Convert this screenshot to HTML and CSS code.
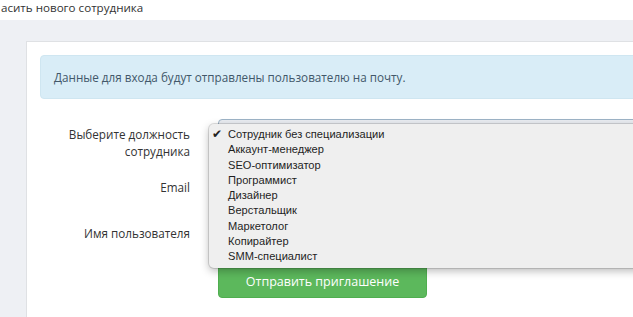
FILE: index.html
```html
<!DOCTYPE html>
<html lang="ru">
<head>
  <meta charset="UTF-8">
  <meta name="viewport" content="width=device-width, initial-scale=1.0">
  <title>Пригласить нового сотрудника</title>
  <link rel="stylesheet" href="styles.css">
</head>
<body>
  <div class="top">
    <h1 class="title">асить нового сотрудника</h1>
  </div>
  <div class="page">
    <div class="card">
      <div class="alert">Данные для входа будут отправлены пользователю на почту.</div>
      <form class="form">
        <div class="row">
          <label class="label">Выберите должность<br>сотрудника</label>
          <div class="control">
            <div class="select"></div>
            <ul class="menu">
              <li class="item checked">Сотрудник без специализации</li>
              <li class="item">Аккаунт-менеджер</li>
              <li class="item">SEO-оптимизатор</li>
              <li class="item">Программист</li>
              <li class="item">Дизайнер</li>
              <li class="item">Верстальщик</li>
              <li class="item">Маркетолог</li>
              <li class="item">Копирайтер</li>
              <li class="item">SMM-специалист</li>
            </ul>
          </div>
        </div>
        <div class="row">
          <label class="label">Email</label>
          <div class="control"><input class="input" type="text"></div>
        </div>
        <div class="row">
          <label class="label">Имя пользователя</label>
          <div class="control"><input class="input" type="text"></div>
        </div>
        <div class="row">
          <div></div>
          <div class="control"><button class="btn" type="button">Отправить приглашение</button></div>
        </div>
      </form>
    </div>
  </div>
</body>
</html>
```

FILE: styles.css
```css
html, body{
  margin: 0;
  padding: 0;
  overflow: hidden;
  background: #fff;
  font-family: "Open Sans", "Liberation Sans", sans-serif;
  color: #333;
}
.top{
  height: 20px;
  background: #fff;
}
.title{
  margin: 0;
  padding: 1px 0 0 1px;
  font-size: 11.6px;
  font-weight: normal;
  line-height: 14px;
  color: #333;
}
.page{
  background: #eef0f4;
  padding: 21px 0 0 26px;
  height: 400px;
}
.card{
  width: 800px;
  background: #fff;
  border: 1px solid #dfe1e4;
  padding: 13px;
  height: 380px;
}
.alert{
  background: #d9edf7;
  border: 1px solid #cfe6f1;
  border-radius: 4px;
  padding: 12px 13px;
  font-size: 11.7px;
  line-height: 18px;
  color: #42586a;
  margin-bottom: 20px;
}
.form{
  margin: 0;
}
.row{
  display: grid;
  grid-template-columns: 150px 1fr;
  column-gap: 28px;
  margin-bottom: 12px;
}
.label{
  padding-top: 7px;
  font-size: 11.7px;
  line-height: 17px;
  text-align: right;
  color: #333;
}
.control{
  position: relative;
}
.select,
.input{
  display: block;
  box-sizing: border-box;
  width: 100%;
  height: 34px;
  border: 1px solid #ccc;
  border-radius: 4px;
  background: #fff;
}
.select{
  border-color: #9db3c6;
  background: #e9ecf1;
}
.menu{
  position: absolute;
  left: -9px;
  top: 5px;
  width: 600px;
  margin: 0;
  padding: 3px 0 4px;
  list-style: none;
  background: #efefef;
  border-radius: 5px;
  box-shadow: 0 0 0 1px rgba(0,0,0,0.12), 0 3px 9px rgba(0,0,0,0.28);
  z-index: 2;
}
.item{
  position: relative;
  padding-left: 19px;
  font-family: "Liberation Sans", Arial, sans-serif;
  font-size: 11.1px;
  line-height: 15.25px;
  color: #1e1e1e;
}
.checked::before{
  content: "✔";
  position: absolute;
  left: 3px;
  top: 0;
  font-family: "DejaVu Sans", sans-serif;
  font-size: 12px;
  color: #222;
}
.btn{
  display: block;
  width: 209px;
  height: 34px;
  background: #5cb85c;
  border: 1px solid #4fae4f;
  border-radius: 4px;
  color: #fff;
  font-family: "Open Sans", "Liberation Sans", sans-serif;
  font-size: 12.5px;
  padding: 0;
}
```
